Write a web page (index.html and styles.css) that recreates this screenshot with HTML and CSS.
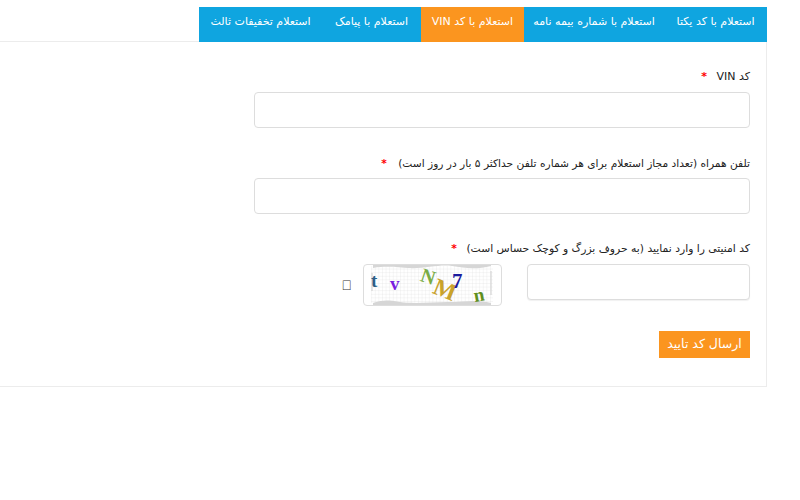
FILE: index.html
```html
<!DOCTYPE html>
<html lang="fa" dir="rtl">
<head>
<meta charset="utf-8">
<title>استعلام با کد VIN</title>
<link rel="stylesheet" href="styles.css">
</head>
<body>
<div class="wrap">
  <ul class="tabs">
    <li class="tab">استعلام با کد یکتا</li>
    <li class="tab">استعلام با شماره بیمه نامه</li>
    <li class="tab active">استعلام با کد VIN</li>
    <li class="tab">استعلام با پیامک</li>
    <li class="tab">استعلام تخفیفات ثالث</li>
  </ul>
  <form class="panel">
    <div class="field">
      <label class="label">کد VIN <span class="req">*</span></label>
      <input class="input" type="text">
    </div>
    <div class="field">
      <label class="label label-long">تلفن همراه (تعداد مجاز استعلام برای هر شماره تلفن حداکثر ۵ بار در روز است) <span class="req">*</span></label>
      <input class="input" type="text">
    </div>
    <div class="field captcha-field">
      <label class="label label-captcha">کد امنیتی را وارد نمایید (به حروف بزرگ و کوچک حساس است) <span class="req">*</span></label>
      <div class="captcha-row">
        <input class="input captcha-input" type="text">
        <div class="captcha-img">
          <svg width="137" height="40" viewBox="0 0 137 40">
            <defs>
              <pattern id="g" width="3.6" height="3.6" patternUnits="userSpaceOnUse">
                <path d="M0 0H3.6M0 0V3.6" stroke="#e2e2e2" stroke-width="0.6" fill="none"/>
              </pattern>
            </defs>
            <rect x="7" y="1" width="122" height="37" fill="url(#g)"/>
            <path d="M9 0H127V1C112 5 100 3 88 1S60 4 44 3 22 1 9 3Z" fill="#d6d6d6"/>
            <path d="M9 40H127V38C112 34 100 37 84 37S50 39 36 37 20 35 9 38Z" fill="#d6d6d6"/>
            <path d="M8 8V26" stroke="#d6d6d6" stroke-width="1.2"/>
            <path d="M127 6V30" stroke="#d6d6d6" stroke-width="1.2"/>
            <text x="7" y="22" class="cl" font-size="19" fill="#2d5f86">t</text>
            <text x="26" y="25" class="cl" font-size="19" fill="#7a1ee0">v</text>
            <text transform="translate(62 18) rotate(18)" text-anchor="middle" class="cl" font-size="20" fill="#79ac45">N</text>
            <text transform="translate(78 32) rotate(22)" text-anchor="middle" class="cl" font-size="24" fill="#c9a32c">M</text>
            <text x="88" y="23" class="cl" font-size="21" fill="#1c1c9e">7</text>
            <text transform="translate(116 36) rotate(-10)" text-anchor="middle" class="cl" font-size="19" fill="#5f8f1e">n</text>
          </svg>
        </div>
        <span class="refresh">&#xf021;</span>
      </div>
    </div>
    <button class="submit" type="button">ارسال کد تایید</button>
  </form>
</div>
</body>
</html>
```
FILE: styles.css
```css
* { box-sizing: border-box; }
html, body { margin: 0; padding: 0; background: #fff; }
body { font-family: "DejaVu Sans", "Noto Sans", sans-serif; color: #222; height: 500px; overflow: hidden; }
.wrap { width: 767px; margin-left: 0; margin-right: 33px; padding-top: 7px; }
.tabs { display: flex; list-style: none; margin: 0 0 -1px; padding: 0; justify-content: flex-start; position: relative; }
.tab { height: 35px; padding: 0 11.4px; line-height: 29px; font-size: 11px; color: #fff; background: #0fa5e0; white-space: nowrap; }
.tab:nth-child(1) { padding: 0 12.4px; }
.tab:nth-child(2) { padding: 0 9.4px; }
.tab:nth-child(3) { padding: 0 10.9px; }
.tab:nth-child(4) { padding: 0 12.9px; }
.tab.active { background: #fb951f; }
.panel { border: 1px solid #ececec; border-left: 0; height: 346px; padding: 27px 16px 0 0; }
.field { margin-bottom: 27px; }
.label { display: block; height: 23px; line-height: 16px; font-size: 11px; color: #222; }
.label-long { font-size: 10.65px; padding-top: 1px; }
.label-long .req { margin-right: 8px; }
.label-captcha { font-size: 10.75px; }
.req { color: #f00; margin-right: 6px; font-weight: bold; }
.input { display: block; width: 496px; height: 36px; border: 1px solid #ddd; border-radius: 4px; background: #fff; }
.captcha-field { margin-bottom: 25px; }
.captcha-row { display: flex; align-items: flex-start; }
.captcha-input { width: 223px; box-shadow: 0 1px 1px rgba(0,0,0,.06); }
.captcha-img { width: 139px; height: 42px; margin-right: 25px; border: 1px solid #ddd; border-radius: 4px; overflow: hidden; background: #fff; direction: ltr; }
.captcha-img svg { display: block; }
.cl { font-family: "Liberation Serif", serif; font-weight: bold; }
.refresh { font-family: "Liberation Sans", sans-serif; font-size: 14px; margin: 13px 11px 0 0; color: #333; }
.submit { display: block; width: 91px; height: 27px; padding: 0 0 2px; border: 0; background: #fb951f; color: #fff; font: 12.5px "DejaVu Sans", sans-serif; }
```
